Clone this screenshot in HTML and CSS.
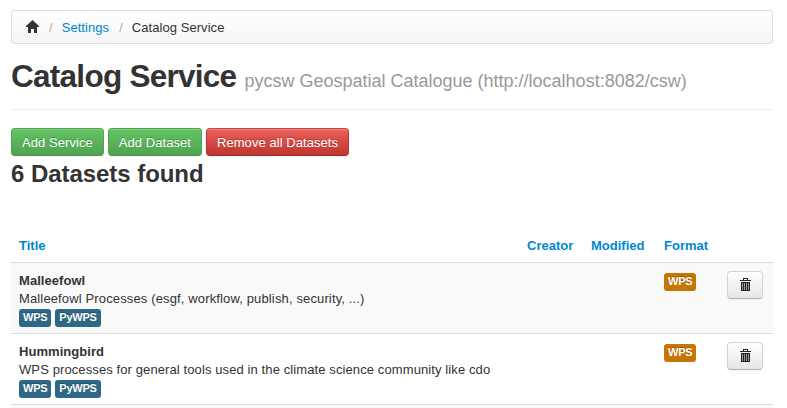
FILE: index.html
```html
<!DOCTYPE html>
<html lang="en">
<head>
<meta charset="utf-8">
<title>Catalog Service</title>
<link rel="stylesheet" href="styles.css">
</head>
<body>
<ul class="breadcrumb">
  <li><svg class="icon home" viewBox="0 0 13 13"><path d="M6.500 0 0 6v1h2v6h3V9h3v4h3V7h2V6z"/></svg><span class="divider">/</span></li>
  <li><a href="#">Settings</a><span class="divider">/</span></li>
  <li>Catalog Service</li>
</ul>
<div class="page-header">
  <h1>Catalog Service <small>pycsw Geospatial Catalogue (http://localhost:8082/csw)</small></h1>
</div>
<div class="actions">
  <a class="btn success" href="#">Add Service</a>
  <a class="btn success" href="#">Add Dataset</a>
  <a class="btn danger" href="#">Remove all Datasets</a>
</div>
<h3>6 Datasets found</h3>
<table>
  <colgroup><col class="c-title"><col class="c-creator"><col class="c-modified"><col class="c-format"><col></colgroup>
  <thead>
    <tr><th><a href="#">Title</a></th><th><a href="#">Creator</a></th><th><a href="#">Modified</a></th><th><a href="#">Format</a></th><th></th></tr>
  </thead>
  <tbody>
    <tr>
      <td><b>Malleefowl</b><div class="first">Malleefowl Processes (esgf, workflow, publish, security, ...)</div><div class="tags"><span class="label info">WPS</span><span class="label info">PyWPS</span></div></td>
      <td></td><td></td>
      <td class="format"><span class="label warning">WPS</span></td>
      <td><button class="btn"><svg class="icon trash" viewBox="0 0 11 13"><path fill-rule="evenodd" d="M3 0h5v2h3v1H0V2h3zM4 1v1h3V1zM1 4h9v9H1z"/><path class="slots" d="M2 5h1v7H2zM4 5h1v7H4zM6 5h1v7H6zM8 5h1v7H8z"/></svg></button></td>
    </tr>
    <tr>
      <td><b>Hummingbird</b><div>WPS processes for general tools used in the climate science community like cdo</div><div class="tags"><span class="label info">WPS</span><span class="label info">PyWPS</span></div></td>
      <td></td><td></td>
      <td class="format"><span class="label warning">WPS</span></td>
      <td><button class="btn"><svg class="icon trash" viewBox="0 0 11 13"><path fill-rule="evenodd" d="M3 0h5v2h3v1H0V2h3zM4 1v1h3V1zM1 4h9v9H1z"/><path class="slots" d="M2 5h1v7H2zM4 5h1v7H4zM6 5h1v7H6zM8 5h1v7H8z"/></svg></button></td>
    </tr>
    <tr class="next"><td></td><td></td><td></td><td></td><td></td></tr>
  </tbody>
</table>
</body>
</html>
```
FILE: styles.css
```css
* { box-sizing: border-box; }
html { overflow: hidden; }
body { margin: 0; padding: 10px 14px 0 11px; height: 408px; overflow: hidden; background: #fff; color: #333; font: 13px/18px "Liberation Sans", Arial, sans-serif; }
a { color: #08c; text-decoration: none; }
.breadcrumb { display: flex; align-items: center; height: 34px; margin: 0 0 18px; padding: 1px 14px 0 13px; list-style: none; border: 1px solid #ddd; border-radius: 3px; background: linear-gradient(#fff, #f5f5f5); box-shadow: inset 0 1px 0 #fff; }
.breadcrumb li { display: flex; align-items: center; letter-spacing: .06px; }
.divider { padding: 0 9px 0 10px; color: #aaa; }
.icon { display: block; fill: #222; }
.home { width: 13px; height: 13px; margin: -2px 0 0 1px; fill: #333; }
.page-header { height: 48px; margin-bottom: 18px; border-bottom: 1px solid #eee; }
h1 { margin: 0; font-size: 31.5px; line-height: 28px; white-space: nowrap; letter-spacing: -.73px; }
h1 small { color: #999; font-size: 18px; font-weight: 400; letter-spacing: 0; }
.actions { display: flex; gap: 4px; height: 28px; }
.btn { display: block; height: 28px; padding: 5px 10px 3px; border: 1px solid #d4d4d4; border-bottom-color: #b3b3b3; border-radius: 4px; background: linear-gradient(#fff, #e6e6e6); box-shadow: inset 0 1px 0 rgba(255,255,255,.2), 0 1px 2px rgba(0,0,0,.05); font-size: 13px; line-height: 18px; letter-spacing: .06px; }
.success, .danger { color: #fff; text-shadow: 0 -1px 0 rgba(0,0,0,.25); }
.success { border-color: #51a351 #51a351 #499249; background: linear-gradient(#62c462, #51a351); }
.danger { border-color: #bd4a46 #bd362f #a02d28; background: linear-gradient(#ee5f5b, #bd362f); }
h3 { margin: 0 0 41px; font-size: 24px; line-height: 36px; letter-spacing: -.05px; }
table { width: 762px; table-layout: fixed; border-collapse: separate; border-spacing: 0; }
.c-title { width: 508px; }
.c-creator { width: 64px; }
.c-modified { width: 73px; }
.c-format { width: 63px; }
th, td { padding: 8px; text-align: left; vertical-align: top; }
th { height: 29px; padding: 4px 8px; }
td { height: 71px; padding-bottom: 6px; border-top: 1px solid #ddd; letter-spacing: .104px; }
td .first { letter-spacing: .137px; }
tbody tr:nth-child(odd) td { background: #f9f9f9; }
td b { display: block; margin-top: 1px; letter-spacing: .05px; }
td.format { padding-top: 10px; }
.next td { height: 4px; padding: 0; }
.tags { display: flex; gap: 4px; margin-top: 1px; }
.label { display: block; width: fit-content; height: 18px; padding: 1px 4px 3px; border-radius: 3px; color: #fff; font-size: 11px; font-weight: 700; line-height: 14px; letter-spacing: -.25px; text-shadow: 0 -1px 0 rgba(0,0,0,.25); }
.info { background: #2d6987; }
.warning { background: #c67605; }
.trash { width: 11px; height: 13px; }
.slots { fill: #999; }
td .btn { width: 36px; padding: 6px 11px 7px 12px; }
```
